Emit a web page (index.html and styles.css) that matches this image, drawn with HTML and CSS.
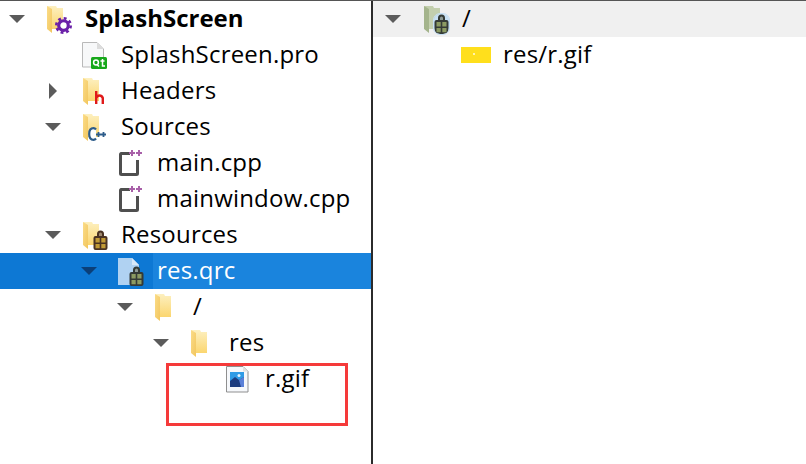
FILE: index.html
```html
<!DOCTYPE html>
<html lang="en">
<head>
<meta charset="utf-8">
<title>SplashScreen</title>
<link rel="stylesheet" href="styles.css">
</head>
<body>
<svg class="defs" width="0" height="0" aria-hidden="true">
  <defs>
    <linearGradient id="fold" x1="0" y1="0" x2="0" y2="1"><stop offset="0" stop-color="#fdf0c0"/><stop offset="1" stop-color="#fbd670"/></linearGradient>
    <linearGradient id="flap" x1="0" y1="0" x2="1" y2="1"><stop offset="0" stop-color="#fbdc88"/><stop offset="1" stop-color="#f2c65e"/></linearGradient>
    <symbol id="folder" viewBox="0 0 16 27">
      <path d="M0 0h9l1 2h6v21H5z" fill="url(#fold)"/>
      <path d="M0 0l5 3v24l-5-4z" fill="url(#flap)"/>
    </symbol>
    <symbol id="folder-dim" viewBox="0 0 16 27">
      <path d="M0 0h9l1 2h6v21H5z" fill="#c3cfae"/>
      <path d="M0 0l5 3v24l-5-4z" fill="#a4b48c"/>
    </symbol>
    <symbol id="lock" viewBox="0 0 15 20">
      <path d="M4 6V4a3.500 3.500 0 0 1 7 0v2h1.500a2 2 0 0 1 2 2v10a2 2 0 0 1-2 2h-10a2 2 0 0 1-2-2V8a2 2 0 0 1 2-2z" fill="#4a3222"/>
      <path d="M6 6V4a1.500 1.500 0 0 1 3 0v2z" fill="#a08a70"/>
      <path class="panes" d="M2.500 8h4.200v4.500H2.500zM8.300 8h4.200v4.500H8.300zM2.500 14h4.200v4.200H2.500zM8.300 14h4.200v4.200H8.300z" fill="#c19a35"/>
    </symbol>
    <symbol id="lock-blue" viewBox="0 0 15 20">
      <path d="M4 6V4a3.500 3.500 0 0 1 7 0v2h1.500a2 2 0 0 1 2 2v10a2 2 0 0 1-2 2h-10a2 2 0 0 1-2-2V8a2 2 0 0 1 2-2z" fill="#343a36"/>
      <path d="M6 6V4a1.500 1.500 0 0 1 3 0v2z" fill="#8e9a96"/>
      <path d="M2.500 8h4.200v4.500H2.500zM8.300 8h4.200v4.500H8.300zM2.500 14h4.200v4.200H2.500zM8.300 14h4.200v4.200H8.300z" fill="#8b9a62"/>
    </symbol>
    <symbol id="cpp" viewBox="0 0 27 28">
      <path d="M3.500 4.500H13M20.500 11v13.500a1 1 0 0 1-1 1h-15a1 1 0 0 1-1-1v-19a1 1 0 0 1 1-1" transform="translate(0 0)" fill="none" stroke="#4f4f4f" stroke-width="3"/>
      <path d="M14 1h2v2h2v2h-2v2h-2V5h-2V3h2zM21 1h2v2h2v2h-2v2h-2V5h-2V3h2z" fill="#a860a8"/>
    </symbol>
    <symbol id="arrow" viewBox="0 0 16 8"><path d="M0 0h16L8 8z"/></symbol>
  </defs>
</svg>
<main class="split">
  <section class="pane pane-left">
    <div class="row lvl0 strong">
      <svg class="arrow"><use href="#arrow"/></svg>
      <span class="icon">
        <svg class="folder"><use href="#folder"/></svg>
        <svg class="badge gear" viewBox="0 0 16 16"><circle cx="8" cy="8" r="4.500" fill="#fff" stroke="#6a1fa8" stroke-width="3"/><circle cx="8" cy="8" r="6.800" fill="none" stroke="#6a1fa8" stroke-width="2.400" stroke-dasharray="2.700 2.640"/></svg>
      </span>
      <span class="label">SplashScreen</span>
    </div>
    <div class="row lvl1 noarrow">
      <span class="icon">
        <svg class="full" viewBox="0 0 26 28"><path d="M1.500 1.500H16l6.500 6.500v18H1.500z" fill="#f7f8f9" stroke="#b9b9b9"/><path d="M16 1.500V8h6.500z" fill="#dcdcdc"/><rect x="10" y="16" width="16" height="12" rx="1.500" fill="#17a81a"/><circle cx="15" cy="21.500" r="2.400" fill="none" stroke="#fff" stroke-width="1.500"/><path d="M16 23.500l2 2M21.500 18v7h2.500M19.500 20h4" fill="none" stroke="#fff" stroke-width="1.500"/></svg>
      </span>
      <span class="label">SplashScreen.pro</span>
    </div>
    <div class="row lvl1">
      <svg class="arrow side" viewBox="0 0 8 16"><path d="M0 0l8 8-8 8z"/></svg>
      <span class="icon">
        <svg class="folder"><use href="#folder"/></svg>
        <svg class="badge hdr" viewBox="0 0 9 13"><path d="M1.200 0v13M1.200 7q1-2.500 3.300-2.500t3.300 2.500v6" fill="none" stroke="#e01a1a" stroke-width="2.400"/></svg>
      </span>
      <span class="label">Headers</span>
    </div>
    <div class="row lvl1">
      <svg class="arrow"><use href="#arrow"/></svg>
      <span class="icon">
        <svg class="folder"><use href="#folder"/></svg>
        <svg class="badge cplus" viewBox="0 0 19 14"><path d="M8 2.500Q7 1.200 5.500 1.200 1.200 1.200 1.200 7t4.300 5.800q1.500 0 2.500-1.300" fill="#fff" stroke="#2d5c8a" stroke-width="2.200"/><path d="M10.500 5v5M8 7.500h5M15.500 5v5M13 7.500h5" stroke="#2d5c8a" stroke-width="1.800"/></svg>
      </span>
      <span class="label">Sources</span>
    </div>
    <div class="row lvl2 noarrow">
      <span class="icon"><svg class="cppfile"><use href="#cpp"/></svg></span>
      <span class="label">main.cpp</span>
    </div>
    <div class="row lvl2 noarrow">
      <span class="icon"><svg class="cppfile"><use href="#cpp"/></svg></span>
      <span class="label">mainwindow.cpp</span>
    </div>
    <div class="row lvl1">
      <svg class="arrow"><use href="#arrow"/></svg>
      <span class="icon">
        <svg class="folder"><use href="#folder"/></svg>
        <svg class="badge lockb"><use href="#lock"/></svg>
      </span>
      <span class="label">Resources</span>
    </div>
    <div class="row lvl2 selected">
      <svg class="arrow"><use href="#arrow"/></svg>
      <span class="icon">
        <svg class="full" viewBox="0 0 26 28"><path d="M1 1h14l7 7v21H1z" fill="#b0d2f2"/><path d="M15 1v7h7z" fill="#d9e9f9"/></svg>
        <svg class="badge lockb"><use href="#lock-blue"/></svg>
      </span>
      <span class="label on-blue">res.qrc</span>
    </div>
    <div class="row lvl3">
      <svg class="arrow"><use href="#arrow"/></svg>
      <span class="icon"><svg class="folder"><use href="#folder"/></svg></span>
      <span class="label">/</span>
    </div>
    <div class="row lvl4">
      <svg class="arrow"><use href="#arrow"/></svg>
      <span class="icon"><svg class="folder"><use href="#folder"/></svg></span>
      <span class="label">res</span>
    </div>
    <div class="row lvl5 noarrow">
      <span class="icon">
        <svg class="full" viewBox="0 0 26 28"><path d="M1.500 1.500H18l5 5v20.500H1.500z" fill="#f6f8fb" stroke="#8f8f8f"/><path d="M18 1.500v5h5z" fill="#e2e2e2"/><rect x="5" y="7" width="14" height="15" fill="#2f9be6"/><path d="M5 22v-6l5-4 4 3 5-3v10z" fill="#1d3d80"/><path d="M14 15l5-3v10h-3z" fill="#5a80d8"/><circle cx="14" cy="10.500" r="1.500" fill="#e4f2ff"/></svg>
      </span>
      <span class="label">r.gif</span>
    </div>
    <div class="callout"></div>
  </section>
  <section class="pane pane-right">
    <div class="row head">
      <svg class="arrow"><use href="#arrow"/></svg>
      <span class="icon">
        <svg class="folder"><use href="#folder-dim"/></svg>
        <svg class="badge lockb halo"><use href="#lock-blue"/></svg>
      </span>
      <span class="label">/</span>
    </div>
    <div class="row entry">
      <span class="swatch"><i></i></span>
      <span class="label">res/r.gif</span>
    </div>
  </section>
</main>
</body>
</html>
```
FILE: styles.css
```css
html, body { margin: 0; padding: 0; background: #fff; }
body { width: 806px; height: 464px; overflow: hidden; font-family: "Open Sans", "Noto Sans", sans-serif; font-size: 24px; letter-spacing: .2px; color: #000; }
.defs { position: absolute; }
.split { display: flex; height: 464px; box-sizing: border-box; border-top: 1px solid #555; }
.pane { box-sizing: border-box; }
.pane-left { position: relative; width: 371px; }
.pane-right { flex: 1; border-left: 2px solid #2b2b2b; }
.row { display: flex; align-items: center; height: 36px; box-sizing: border-box; white-space: nowrap; }
.label { padding-bottom: 4px; }
.arrow { width: 16px; height: 8px; fill: #5b5b5b; flex: none; margin-right: 20px; }
.arrow.side { width: 8px; height: 16px; margin-left: 4px; margin-right: 24px; }
.icon { position: relative; display: block; flex: none; width: 24px; height: 28px; margin-right: 16px; }
.folder { position: absolute; left: 2px; top: 1px; width: 16px; height: 27px; }
.full { position: absolute; left: 0; top: 0; width: 26px; height: 28px; }
.cppfile { position: absolute; left: 0; top: 0; width: 27px; height: 28px; }
.badge { position: absolute; }
.gear { left: 10px; top: 12px; width: 17px; height: 17px; }
.hdr { left: 14px; top: 14px; width: 9px; height: 13px; }
.cplus { left: 7px; top: 14px; width: 19px; height: 14px; }
.lockb { left: 12px; top: 9px; width: 15px; height: 20px; }
.halo { background: #c7e0f4; border-radius: 6px; outline: 1px solid #c7e0f4; }
.lvl0 { padding-left: 9px; }
.lvl1 { padding-left: 45px; }
.lvl1.noarrow { padding-left: 81px; }
.lvl2 { padding-left: 81px; }
.lvl2.noarrow { padding-left: 117px; }
.lvl3 { padding-left: 117px; }
.lvl4 { padding-left: 153px; }
.lvl5.noarrow { padding-left: 225px; }
.strong .label { font-weight: 700; letter-spacing: 0; }
.selected { background: #0d78d4; }
.on-blue { color: #fff; background: #1a84dd; margin-left: -4px; padding: 0 4px; height: 36px; line-height: 34px; flex: 1; box-sizing: border-box; }
.selected .arrow { fill: #0b3f78; }
.callout { position: absolute; left: 166px; top: 362px; width: 182px; height: 63px; box-sizing: border-box; border: 3px solid #f53a3a; }
.head { padding-left: 12px; background: #f0f0f0; }
.head .arrow { margin-right: 21px; }
.entry { padding-left: 88px; }
.swatch { position: relative; display: block; flex: none; width: 30px; height: 16px; background: #ffdf1c; margin-right: 12px; }
.swatch i { position: absolute; left: 12px; top: 6px; width: 2px; height: 2px; background: #fff3b0; }
```
